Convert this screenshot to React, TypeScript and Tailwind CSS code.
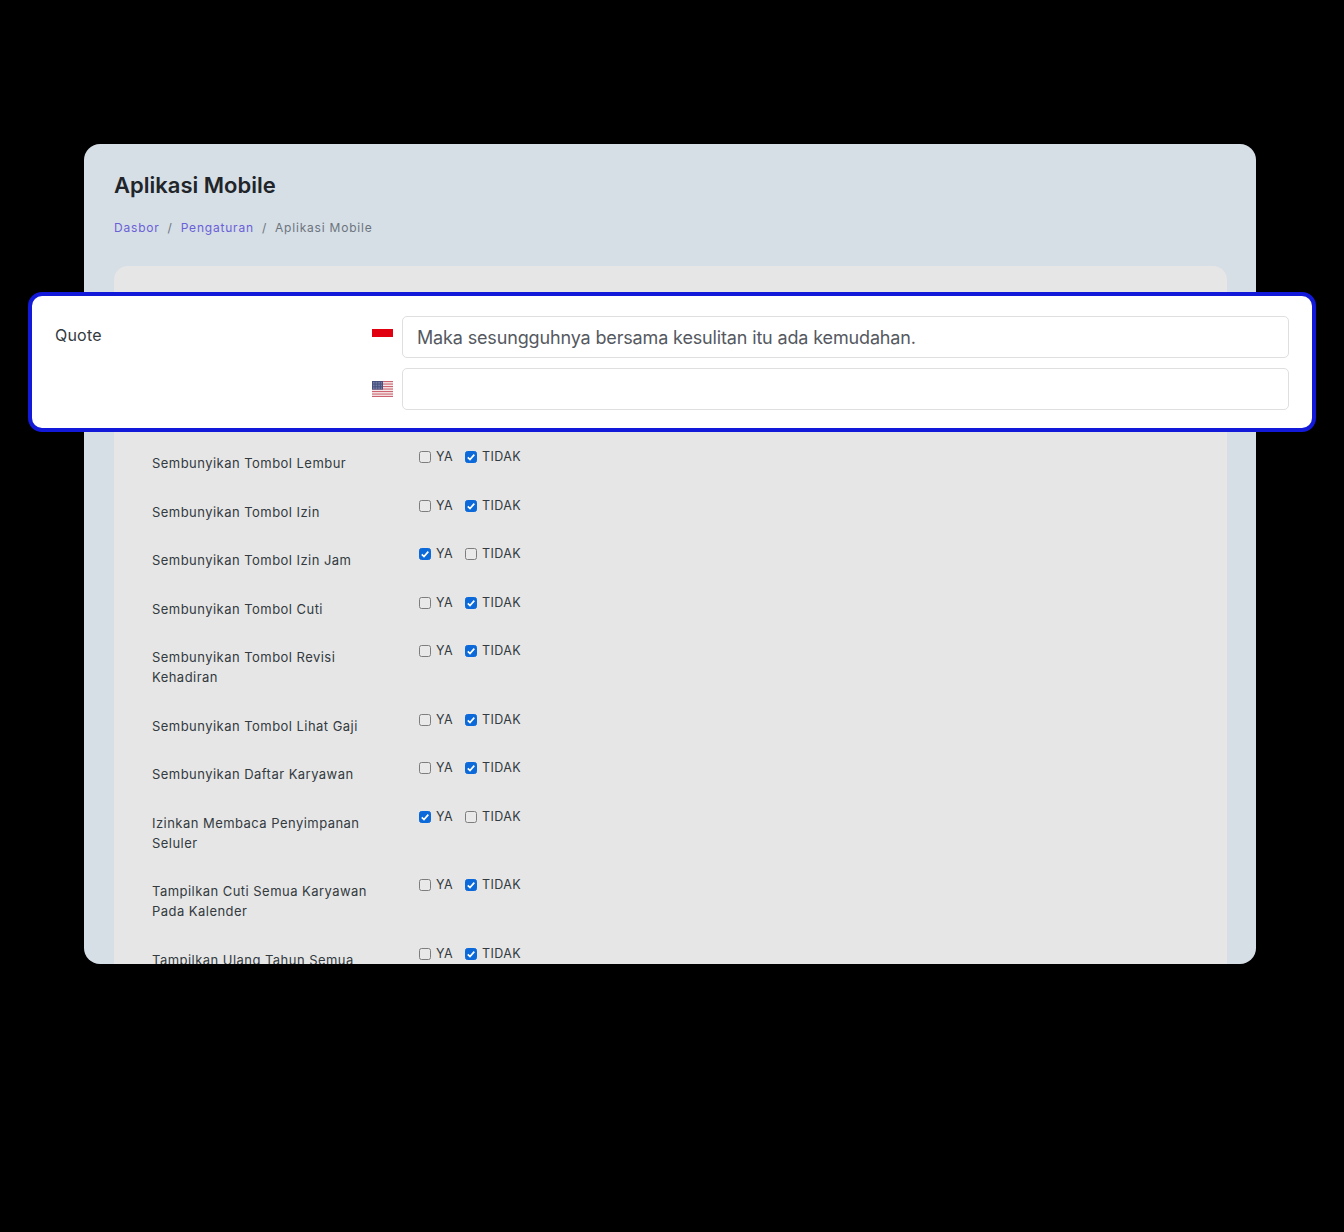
const rows = [
  { label: 'Sembunyikan Tombol Lembur', ya: false },
  { label: 'Sembunyikan Tombol Izin', ya: false },
  { label: 'Sembunyikan Tombol Izin Jam', ya: true },
  { label: 'Sembunyikan Tombol Cuti', ya: false },
  { label: 'Sembunyikan Tombol Revisi Kehadiran', ya: false },
  { label: 'Sembunyikan Tombol Lihat Gaji', ya: false },
  { label: 'Sembunyikan Daftar Karyawan', ya: false },
  { label: 'Izinkan Membaca Penyimpanan Seluler', ya: true },
  { label: 'Tampilkan Cuti Semua Karyawan Pada Kalender', ya: false },
  { label: 'Tampilkan Ulang Tahun Semua Karyawan', ya: false },
];

function FlagId() {
  return (
    <svg width="21" height="8" viewBox="0 0 21 8" className="block shrink-0">
      <rect width="21" height="8" fill="#e0000f" />
    </svg>
  );
}

function FlagUs() {
  const stars = [];
  for (let y = 1; y < 8.5; y += 1.6) {
    for (let x = 1; x < 10.5; x += 1.6) {
      stars.push(<rect key={`${x}-${y}`} x={x} y={y} width="0.7" height="0.7" fill="#a9b0cc" />);
    }
  }
  return (
    <svg width="21" height="16" viewBox="0 0 21 16" className="block shrink-0">
      <rect width="21" height="16" fill="#f6eaea" />
      {[0, 2.5, 5, 7.5, 10, 12.5, 14.9].map((y) => (
        <rect key={y} y={y} width="21" height="1.1" fill="#cb6470" />
      ))}
      <rect width="11" height="8.6" fill="#46507f" />
      {stars}
    </svg>
  );
}

function Choice({ label, checked }: { label: string; checked: boolean }) {
  return (
    <label className="flex items-center gap-[5px]">
      <span className="relative block h-[12px] w-[12px]">
        <input
          type="checkbox"
          defaultChecked={checked}
          className="m-0 block h-[12px] w-[12px] appearance-none rounded-[2.5px] border border-[#7d7d7d] bg-[#e9e9e9] checked:border-[#0b69d9] checked:bg-[#0b69d9]"
        />
        {checked && (
          <svg viewBox="0 0 12 12" className="pointer-events-none absolute inset-0 h-[12px] w-[12px]">
            <path d="M2.8 6.3 5 8.5 9.3 3.6" fill="none" stroke="#ffffff" strokeWidth="1.7" />
          </svg>
        )}
      </span>
      <span>{label}</span>
    </label>
  );
}

export default function App() {
  return (
    <div className="relative min-h-[1232px] bg-black pt-[144px] font-['Inter',sans-serif]">
      <div className="ml-[84px] h-[820px] w-[1172px] overflow-hidden rounded-[16px] bg-[#d6dee6] pl-[30px] pr-[29px] pt-[27px]">
        <h1 className="text-[22px] leading-[28px] font-semibold text-[#212529]">Aplikasi Mobile</h1>
        <div className="mt-[21px] flex gap-[8px] text-[12px] leading-[16px] tracking-[0.8px] text-[#6c757d]">
          <span className="text-[#6a61d6]">Dasbor</span>
          <span>/</span>
          <span className="text-[#6a61d6]">Pengaturan</span>
          <span>/</span>
          <span>Aplikasi Mobile</span>
        </div>
        <div className="mt-[30px] rounded-t-[14px] bg-[#e6e6e6] pl-[38px] pt-[187.3px] text-[#333a40]">
          {rows.map((row) => (
            <div key={row.label} className="flex pb-[28.5px]">
              <div className="w-[227px] text-[13px] leading-[20px] tracking-[0.46px]">{row.label}</div>
              <div className="ml-[40px] -mt-[3px] flex h-[14px] items-center gap-[12px] text-[12.5px] leading-[14px] tracking-[0.4px]">
                <Choice label="YA" checked={row.ya} />
                <Choice label="TIDAK" checked={!row.ya} />
              </div>
            </div>
          ))}
        </div>
      </div>

      <div className="absolute left-[28px] top-[292px] flex h-[140px] w-[1288px] rounded-[14px] border-4 border-[#1219d8] bg-white px-[23px] pt-[20px]">
        <div className="w-[317px] pt-[9px] text-[16px] leading-[20px] tracking-[0.2px] text-[#333a40]">Quote</div>
        <div className="flex flex-1 flex-col gap-[10px]">
          <div className="flex items-start gap-[9px]">
            <div className="pt-[13px]"><FlagId /></div>
            <input
              defaultValue="Maka sesungguhnya bersama kesulitan itu ada kemudahan."
              className="h-[42px] flex-1 rounded-[5px] border-[1.5px] border-[#dfdfdf] px-[14px] text-[18px] tracking-[-0.15px] text-[#55595f] outline-none"
            />
          </div>
          <div className="flex items-start gap-[9px]">
            <div className="pt-[13px]"><FlagUs /></div>
            <input className="h-[42px] flex-1 rounded-[5px] border-[1.5px] border-[#dfdfdf] px-[14px] text-[18px] outline-none" />
          </div>
        </div>
      </div>
    </div>
  );
}
